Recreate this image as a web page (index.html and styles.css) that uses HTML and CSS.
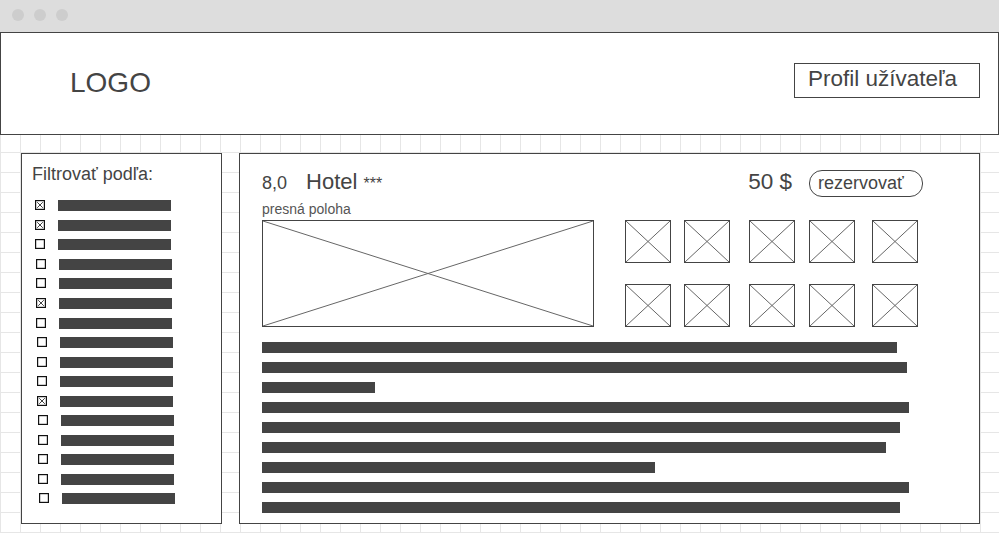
FILE: index.html
```html
<!DOCTYPE html>
<html lang="sk">
<head>
    <meta charset="UTF-8">
    <meta name="viewport" content="width=device-width, initial-scale=1.0">
    <title>Hotel - wireframe</title>
    <link rel="stylesheet" href="styles.css">
</head>
<body>
    <div class="window-bar">
        <span class="dot"></span>
        <span class="dot"></span>
        <span class="dot"></span>
    </div>

    <header class="site-header">
        <div class="logo">LOGO</div>
        <div class="profile">Profil užívateľa</div>
    </header>

    <main class="content">
        <aside class="filters">
            <h3 class="filters-title">Filtrovať podľa:</h3>
            <ul class="filter-list">
                <li class="filter-row"><svg class="check" viewBox="0 0 10 10"><rect x="0.6" y="0.6" width="8.8" height="8.8"/><path d="M2.2 2.2L7.8 7.8M7.8 2.2L2.2 7.8"/></svg><span class="line"></span></li>
                <li class="filter-row"><svg class="check" viewBox="0 0 10 10"><rect x="0.6" y="0.6" width="8.8" height="8.8"/><path d="M2.2 2.2L7.8 7.8M7.8 2.2L2.2 7.8"/></svg><span class="line"></span></li>
                <li class="filter-row"><svg class="check" viewBox="0 0 10 10"><rect x="0.6" y="0.6" width="8.8" height="8.8"/></svg><span class="line"></span></li>
                <li class="filter-row"><svg class="check" viewBox="0 0 10 10"><rect x="0.6" y="0.6" width="8.8" height="8.8"/></svg><span class="line"></span></li>
                <li class="filter-row"><svg class="check" viewBox="0 0 10 10"><rect x="0.6" y="0.6" width="8.8" height="8.8"/></svg><span class="line"></span></li>
                <li class="filter-row"><svg class="check" viewBox="0 0 10 10"><rect x="0.6" y="0.6" width="8.8" height="8.8"/><path d="M2.2 2.2L7.8 7.8M7.8 2.2L2.2 7.8"/></svg><span class="line"></span></li>
                <li class="filter-row"><svg class="check" viewBox="0 0 10 10"><rect x="0.6" y="0.6" width="8.8" height="8.8"/></svg><span class="line"></span></li>
                <li class="filter-row"><svg class="check" viewBox="0 0 10 10"><rect x="0.6" y="0.6" width="8.8" height="8.8"/></svg><span class="line"></span></li>
                <li class="filter-row"><svg class="check" viewBox="0 0 10 10"><rect x="0.6" y="0.6" width="8.8" height="8.8"/></svg><span class="line"></span></li>
                <li class="filter-row"><svg class="check" viewBox="0 0 10 10"><rect x="0.6" y="0.6" width="8.8" height="8.8"/></svg><span class="line"></span></li>
                <li class="filter-row"><svg class="check" viewBox="0 0 10 10"><rect x="0.6" y="0.6" width="8.8" height="8.8"/><path d="M2.2 2.2L7.8 7.8M7.8 2.2L2.2 7.8"/></svg><span class="line"></span></li>
                <li class="filter-row"><svg class="check" viewBox="0 0 10 10"><rect x="0.6" y="0.6" width="8.8" height="8.8"/></svg><span class="line"></span></li>
                <li class="filter-row"><svg class="check" viewBox="0 0 10 10"><rect x="0.6" y="0.6" width="8.8" height="8.8"/></svg><span class="line"></span></li>
                <li class="filter-row"><svg class="check" viewBox="0 0 10 10"><rect x="0.6" y="0.6" width="8.8" height="8.8"/></svg><span class="line"></span></li>
                <li class="filter-row"><svg class="check" viewBox="0 0 10 10"><rect x="0.6" y="0.6" width="8.8" height="8.8"/></svg><span class="line"></span></li>
                <li class="filter-row"><svg class="check" viewBox="0 0 10 10"><rect x="0.6" y="0.6" width="8.8" height="8.8"/></svg><span class="line"></span></li>
            </ul>
        </aside>

        <section class="hotel">
            <div class="hotel-top">
                <span class="rating">8,0</span>
                <span class="hotel-name">Hotel <span class="stars">***</span></span>
                <span class="price">50 $</span>
                <button class="book">rezervovať</button>
            </div>
            <div class="location">presná poloha</div>

            <div class="gallery">
                <svg class="ph ph-main"><line x1="0" y1="0" x2="100%" y2="100%"/><line x1="100%" y1="0" x2="0" y2="100%"/></svg>
                <div class="thumbs">
                    <svg class="ph"><line x1="0" y1="0" x2="100%" y2="100%"/><line x1="100%" y1="0" x2="0" y2="100%"/></svg>
                    <svg class="ph"><line x1="0" y1="0" x2="100%" y2="100%"/><line x1="100%" y1="0" x2="0" y2="100%"/></svg>
                    <svg class="ph"><line x1="0" y1="0" x2="100%" y2="100%"/><line x1="100%" y1="0" x2="0" y2="100%"/></svg>
                    <svg class="ph"><line x1="0" y1="0" x2="100%" y2="100%"/><line x1="100%" y1="0" x2="0" y2="100%"/></svg>
                    <svg class="ph"><line x1="0" y1="0" x2="100%" y2="100%"/><line x1="100%" y1="0" x2="0" y2="100%"/></svg>
                    <svg class="ph"><line x1="0" y1="0" x2="100%" y2="100%"/><line x1="100%" y1="0" x2="0" y2="100%"/></svg>
                    <svg class="ph"><line x1="0" y1="0" x2="100%" y2="100%"/><line x1="100%" y1="0" x2="0" y2="100%"/></svg>
                    <svg class="ph"><line x1="0" y1="0" x2="100%" y2="100%"/><line x1="100%" y1="0" x2="0" y2="100%"/></svg>
                    <svg class="ph"><line x1="0" y1="0" x2="100%" y2="100%"/><line x1="100%" y1="0" x2="0" y2="100%"/></svg>
                    <svg class="ph"><line x1="0" y1="0" x2="100%" y2="100%"/><line x1="100%" y1="0" x2="0" y2="100%"/></svg>
                </div>
            </div>

            <div class="desc">
                <span class="bar" style="width: 635px"></span>
                <span class="bar" style="width: 645px"></span>
                <span class="bar" style="width: 113px"></span>
                <span class="bar" style="width: 647px"></span>
                <span class="bar" style="width: 638px"></span>
                <span class="bar" style="width: 624px"></span>
                <span class="bar" style="width: 393px"></span>
                <span class="bar" style="width: 647px"></span>
                <span class="bar" style="width: 638px"></span>
            </div>
        </section>
    </main>
</body>
</html>
```

FILE: styles.css
```css
/* wireframe page */
body, html {
    margin: 0;
    padding: 0;
    font-family: 'Liberation Sans', Arial, sans-serif;
    color: #444;
}
body {
    min-height: 533px;
    background-color: #fff;
    background-image:
        linear-gradient(to right, #e6e6e6 1px, transparent 1px),
        linear-gradient(to bottom, #e6e6e6 1px, transparent 1px);
    background-size: 20px 20px;
    background-position: 0 32px;
}

/* browser chrome */
.window-bar {
    height: 32px;
    background-color: #dddddd;
    display: flex;
    align-items: center;
    gap: 10px;
    padding-left: 12px;
    box-sizing: border-box;
}
.window-bar .dot {
    width: 12px;
    height: 12px;
    border-radius: 50%;
    background-color: #cdcdcd;
    margin-top: -2px;
}

/* header */
.site-header {
    height: 103px;
    box-sizing: border-box;
    border: 1px solid #444;
    background-color: #fff;
    display: flex;
    justify-content: space-between;
    align-items: flex-start;
    padding: 30px 18px 0 69px;
}
.logo {
    font-size: 28px;
    line-height: 31px;
    margin-top: 4px;
}
.profile {
    width: 186px;
    box-sizing: border-box;
    border: 1px solid #444;
    font-size: 22.5px;
    line-height: 25px;
    padding: 2px 0 6px 13px;
}

/* main area */
.content {
    display: flex;
    gap: 17px;
    padding: 18px 0 0 21px;
}

.filters {
    width: 201px;
    height: 371px;
    box-sizing: border-box;
    border: 1px solid #444;
    background-color: #fff;
    padding: 10px 0 0 10px;
}
.filters-title {
    margin: 0;
    font-size: 18px;
    font-weight: normal;
    line-height: 21px;
}
.filter-list {
    list-style: none;
    margin: 11px 0 0;
    padding: 0 0 0 3px;
}
.filter-row {
    height: 19.55px;
    display: flex;
    align-items: center;
    gap: 13px;
}
.filter-row:nth-child(n+4) { padding-left: 1px; }
.filter-row:nth-child(n+8) { padding-left: 2px; }
.filter-row:nth-child(n+12) { padding-left: 3px; }
.filter-row:nth-child(16) { padding-left: 4px; }
.check {
    width: 10px;
    height: 10px;
    flex: none;
    fill: none;
    stroke: #111;
    stroke-width: 1.2;
    margin-top: -1px;
}
.check path {
    stroke-width: 0.8;
}
.filter-row .line {
    width: 113px;
    height: 11px;
    background-color: #444;
}

/* hotel card */
.hotel {
    width: 741px;
    height: 371px;
    box-sizing: border-box;
    border: 1px solid #444;
    background-color: #fff;
    padding: 16px 56px 0 22px;
}
.hotel-top {
    display: flex;
    align-items: baseline;
}
.rating {
    font-size: 18px;
    line-height: 20px;
}
.hotel-name {
    font-size: 22px;
    line-height: 20px;
    margin-left: 19px;
}
.stars {
    font-size: 16px;
}
.price {
    font-size: 22.5px;
    line-height: 20px;
    margin-left: auto;
}
.book {
    width: 114px;
    margin-left: 17px;
    box-sizing: border-box;
    border: 1px solid #444;
    border-radius: 13px;
    background-color: #fff;
    color: #444;
    font-family: 'Liberation Sans', Arial, sans-serif;
    font-size: 18px;
    line-height: 20px;
    padding: 2px 0 3px 8px;
    text-align: left;
    cursor: pointer;
}
.location {
    font-size: 14px;
    line-height: 16px;
    color: #555;
    margin-top: 4px;
}

.gallery {
    display: flex;
    align-items: flex-start;
    margin-top: 3px;
}
.ph {
    display: block;
    box-sizing: border-box;
    border: 1px solid #444;
    stroke: #666;
    stroke-width: 1;
    width: 46px;
    height: 43px;
}
.ph-main {
    width: 332px;
    height: 107px;
}
.thumbs {
    display: grid;
    grid-template-columns: 59px 65px 60px 63px 46px;
    grid-template-rows: 43px 43px;
    row-gap: 21px;
    margin-left: 31px;
}

.desc {
    margin-top: 15px;
}
.desc .bar {
    display: block;
    height: 11px;
    margin-bottom: 9px;
    background-color: #444;
}
```
